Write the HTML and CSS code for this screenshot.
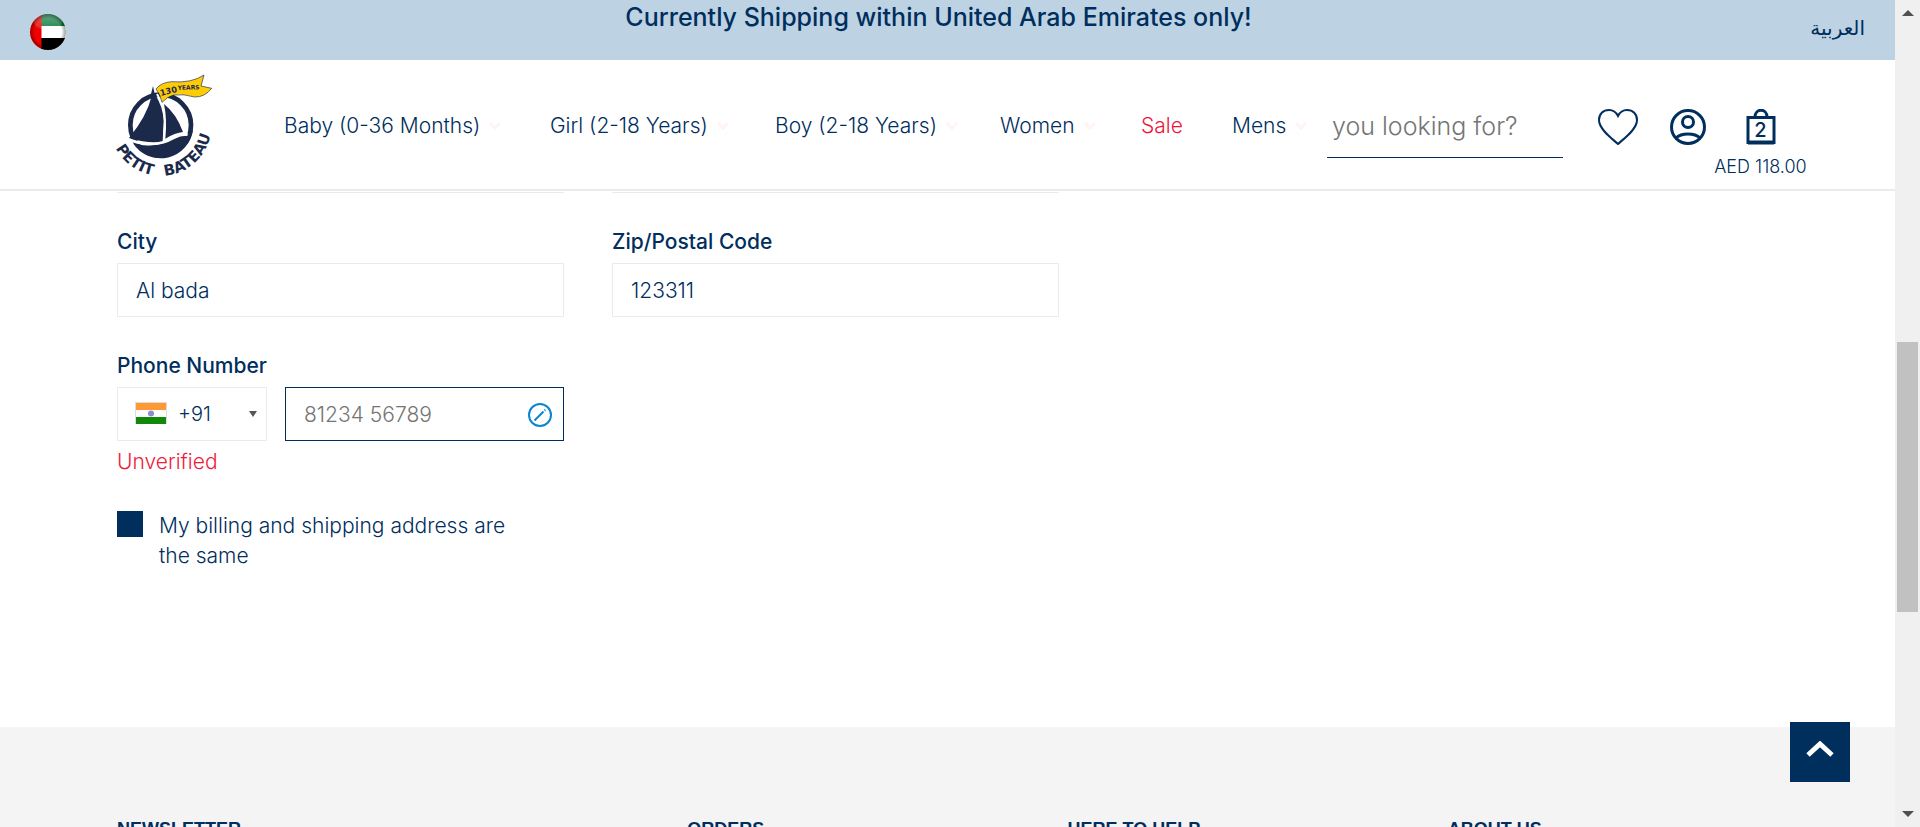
FILE: index.html
```html
<!DOCTYPE html>
<html lang="en">
<head>
<meta charset="utf-8">
<title>Petit Bateau – Shipping address</title>
<link rel="stylesheet" href="styles.css">
</head>
<body>
<div class="window">
  <div class="page">
    <div class="topbar">
      <a class="region" href="#" aria-label="United Arab Emirates">
        <svg class="region-flag" viewBox="0 0 36 36">
          <defs>
            <clipPath id="round"><circle cx="18" cy="18" r="18"/></clipPath>
            <radialGradient id="shade"><stop offset=".75" stop-opacity="0"/><stop offset="1" stop-opacity=".4"/></radialGradient>
            <linearGradient id="gloss" x2="0" y2="1"><stop offset="0" stop-color="#fff" stop-opacity=".35"/><stop offset="1" stop-color="#fff" stop-opacity=".1"/></linearGradient>
          </defs>
          <g clip-path="url(#round)">
            <path fill="#fff" d="M0 0h36v36H0z"/>
            <path fill="#0b7a3b" d="M11 0h25v12H11z"/>
            <path d="M11 24h25v12H11z"/>
            <path fill="#f00000" d="M0 0h11.500v36H0z"/>
            <ellipse cx="18" cy="8" rx="14" ry="8" fill="url(#gloss)"/>
            <circle cx="18" cy="18" r="18" fill="url(#shade)"/>
          </g>
        </svg>
      </a>
      <p class="notice">Currently Shipping within United Arab Emirates only!</p>
      <a class="language" href="#" lang="ar" dir="rtl">العربية</a>
    </div>

    <header class="header">
      <a class="logo" href="#" aria-label="Petit Bateau">
        <svg class="logo-art" viewBox="350 224 288 312">
          <defs>
            <path id="arc-left" d="M346 446A152 152 0 0 0 481 529"/>
            <path id="arc-right" d="M493 529A152 152 0 0 0 633 370"/>
          </defs>
          <circle cx="481" cy="377" r="91" fill="#fff" stroke="#1b2a4b" stroke-width="14"/>
          <path fill="#1b2a4b" d="M398 432Q420 440 455 438Q492 436 522 419Q545 406 568 410L578 388A98 98 0 0 1 398 432z"/>
          <path fill="none" stroke="#fff" stroke-width="8" d="M378 416Q415 436 458 433Q492 430 520 413Q540 401 562 406"/>
          <path fill="#1b2a4b" d="M458 260L463 284Q488 320 490 365L487 425Q455 436 386 416Q440 350 454 290L452 284z"/>
          <path fill="none" stroke="#fff" stroke-width="6" d="M470 284Q494 322 494 368L491 422"/>
          <path fill="#1b2a4b" d="M491 314Q528 343 548 398Q525 400 495 418Q501 360 491 314z"/>
          <path fill="#ffcb05" stroke="#1b2a4b" stroke-width="2" d="M467 269Q482 249 514 247Q574 252 611 227L602 260L634 267Q613 294 583 293Q550 283 520 287Q501 292 485 309Q479 282 467 269z"/>
          <g fill="#1b2a4b">
            <text class="logo-number" transform="translate(481 290) rotate(-14)">130</text>
            <text class="logo-years" transform="translate(532 272) rotate(-2)">YEARS</text>
            <text class="logo-name"><textPath href="#arc-left">PETIT</textPath></text>
            <text class="logo-name"><textPath href="#arc-right">BATEAU</textPath></text>
          </g>
        </svg>
      </a>

      <nav class="nav">
        <a class="nav-link" href="#">Baby (0-36 Months)<svg class="chevron" viewBox="0 0 12 8"><path d="M1 1l5 5 5-5"/></svg></a>
        <a class="nav-link" href="#">Girl (2-18 Years)<svg class="chevron" viewBox="0 0 12 8"><path d="M1 1l5 5 5-5"/></svg></a>
        <a class="nav-link" href="#">Boy (2-18 Years)<svg class="chevron" viewBox="0 0 12 8"><path d="M1 1l5 5 5-5"/></svg></a>
        <a class="nav-link" href="#">Women<svg class="chevron" viewBox="0 0 12 8"><path d="M1 1l5 5 5-5"/></svg></a>
        <a class="nav-link nav-link-sale" href="#">Sale</a>
        <a class="nav-link" href="#">Mens<svg class="chevron" viewBox="0 0 12 8"><path d="M1 1l5 5 5-5"/></svg></a>
      </nav>

      <input class="search" type="search" aria-label="Search" placeholder="you looking for?">

      <div class="actions">
        <a class="action" href="#" aria-label="Wishlist">
          <svg class="icon-heart" viewBox="0 0 40 36"><path d="M20 35C16 31 1 21 1 11C1 5 5 1 11 1C15 1 18 3 20 7C22 3 25 1 29 1C35 1 39 5 39 11C39 21 24 31 20 35z"/></svg>
        </a>
        <a class="action" href="#" aria-label="Account">
          <svg class="icon-user" viewBox="0 0 36 36"><circle cx="18" cy="18" r="16.500"/><circle cx="18" cy="13" r="5.500"/><path d="M6 29Q10 25 18 25T30 29"/></svg>
        </a>
        <a class="cart" href="#" aria-label="Cart">
          <span class="bag">
            <svg class="icon-bag" viewBox="0 0 30 36"><path d="M2 8.500h26v25H2z"/><path d="M2 33.500h26" stroke-width="4"/><path d="M9 8C9 -1 21 -1 21 8"/></svg>
            <span class="bag-count">2</span>
          </span>
          <span class="cart-total">AED 118.00</span>
        </a>
      </div>
    </header>

    <main class="content">
      <form class="form">
        <div class="field-edge"></div>
        <div class="field-edge"></div>

        <div class="field">
          <label class="label" for="city">City</label>
          <input class="input" id="city" type="text" value="Al bada">
        </div>
        <div class="field">
          <label class="label" for="zip">Zip/Postal Code</label>
          <input class="input" id="zip" type="text" value="123311">
        </div>

        <div class="field">
          <label class="label" for="phone">Phone Number</label>
          <div class="phone-row">
            <div class="country">
              <select class="input country-select" aria-label="Country code"><option>+91</option></select>
              <svg class="country-flag" viewBox="0 0 32 22">
                <path fill="#ddd" d="M0 0h32v22H0z"/><path fill="#fff" d="M1 1h30v20H1z"/>
                <path fill="#ff9933" d="M1 1h30v7H1z"/><path fill="#128807" d="M1 15h30v7H1z"/>
                <circle cx="16" cy="11.500" r="3" fill="#8d8dcb"/>
              </svg>
              <svg class="country-arrow" viewBox="0 0 8 6"><path fill="#555" d="M0 0h8L4 6z"/></svg>
            </div>
            <div class="phone">
              <input class="input input-active" id="phone" type="tel" placeholder="81234 56789">
              <button class="edit" type="button" aria-label="Edit phone number">
                <svg class="icon-edit" viewBox="0 0 24 24"><circle cx="12" cy="12" r="11"/><path d="M6.500 17.500l9-9M16.500 7.500l.8-.8"/></svg>
              </button>
            </div>
          </div>
          <p class="status">Unverified</p>
          <div class="same">
            <input class="same-box" id="same" type="checkbox" checked>
            <label class="same-label" for="same">My billing and shipping address are the same</label>
          </div>
        </div>
      </form>
    </main>

    <footer class="footer">
      <h2 class="footer-title">NEWSLETTER</h2>
      <h2 class="footer-title">ORDERS</h2>
      <h2 class="footer-title">HERE TO HELP</h2>
      <h2 class="footer-title">ABOUT US</h2>
    </footer>

    <button class="to-top" type="button" aria-label="Back to top">
      <svg class="icon-up" viewBox="0 0 28 16"><path d="M2 14L14 3l12 11"/></svg>
    </button>
  </div>

  <div class="scrollbar">
    <svg class="scroll-arrow" viewBox="0 0 12 6"><path d="M0 6h12L6 0z"/></svg>
    <div class="scroll-track"><div class="scroll-thumb"></div></div>
    <svg class="scroll-arrow" viewBox="0 0 12 6"><path d="M0 0h12L6 6z"/></svg>
  </div>
</div>
</body>
</html>
```
FILE: styles.css
```css
* { box-sizing: border-box; }

body {
  margin: 0;
  background: #fff;
  color: #002e5d;
  font-family: Inter, "Noto Sans", sans-serif;
  font-size: 21px;
  font-weight: 300;
  line-height: 30px;
}

a { color: inherit; text-decoration: none; }
p, h2 { margin: 0; }
svg { display: block; }
input, select, button { font: inherit; color: inherit; }

.window { display: flex; height: 100vh; overflow: hidden; }
.page { position: relative; flex: 1; min-width: 0; display: flex; flex-direction: column; overflow: hidden; }

/* Announcement bar */
.topbar {
  display: grid;
  grid-template-columns: 1fr auto 1fr;
  flex: none;
  height: 60px;
  padding: 0 30px;
  background: #bdd3e3;
}
.region { width: 36px; padding-top: 14px; }
.region-flag { width: 36px; height: 36px; }
.notice { padding: 2px 18px 0 0; font-size: 25px; font-weight: 500; }
.language { justify-self: end; padding-top: 13px; font-family: "Liberation Serif", "DejaVu Sans", serif; font-size: 20px; font-weight: 400; }

/* Header */
.header {
  display: flex;
  flex: none;
  align-items: center;
  height: 131px;
  padding: 3px 86px 0 117px;
  border-bottom: 2px solid #ebebeb;
}
.logo { flex: none; margin-right: 71px; }
.logo-art { width: 96px; height: 104px; overflow: visible; }
.logo-name { font: bold 45px "DejaVu Sans", sans-serif; }
.logo-number { font: bold 25px "DejaVu Sans", sans-serif; }
.logo-years { font: bold 18px "DejaVu Sans", sans-serif; }

.nav { display: grid; flex: 1; grid-template-columns: 266fr 225fr 225fr 141fr 91fr 95fr; }
.nav-link { display: flex; align-items: center; gap: 9px; white-space: nowrap; }
.nav-link-sale { color: #f0143c; }
.chevron { width: 12px; height: 8px; fill: none; stroke: #fff4f5; stroke-width: 3; }

.search {
  flex: none;
  width: 236px;
  height: 64px;
  padding: 0 5px;
  border: 0;
  border-bottom: 1px solid #002e5d;
  background: none;
  font-size: 25px;
  outline: 0;
}
.search::placeholder, .input::placeholder { color: #757575; opacity: 1; }

.actions { display: flex; align-self: flex-start; margin: 46px 0 0 35px; }
.icon-heart, .icon-user, .icon-bag { height: 36px; fill: none; stroke: #002e5d; }
.icon-heart { width: 40px; margin-right: 32px; stroke-width: 2; }
.icon-user { width: 36px; stroke-width: 3; }
.icon-bag { width: 30px; stroke-width: 3; }
.cart { display: flex; flex-direction: column; align-items: center; gap: 12px; width: 97px; margin-left: 6px; }
.bag { position: relative; }
.bag-count { position: absolute; inset: 8px 0 0; font-size: 20px; font-weight: 500; line-height: 27px; text-align: center; }
.cart-total { font-size: 18px; line-height: 20px; white-space: nowrap; }

/* Address form */
.content { flex: none; height: 536px; padding: 1px 117px 0; }
.form { display: grid; grid-template-columns: 447px 447px; column-gap: 48px; row-gap: 37px; }
.field-edge { height: 1px; background: #ebebeb; }
.label { display: block; margin-bottom: 9px; font-weight: 500; line-height: 24px; }
.input {
  display: block;
  width: 100%;
  height: 54px;
  padding: 0 18px;
  border: 1px solid #ebebeb;
  border-radius: 0;
  background: #fff;
  outline: 0;
}
.input-active { border-color: #002e5d; }
.phone-row { display: grid; grid-template-columns: 150px 1fr; gap: 18px; }
.country, .phone { position: relative; }
.country-select { padding-left: 60px; appearance: none; font-size: 20px; }
.country-flag { position: absolute; top: 15px; left: 18px; width: 32px; height: 22px; pointer-events: none; }
.country-arrow { position: absolute; top: 24px; right: 10px; width: 8px; height: 6px; pointer-events: none; }
.edit { position: absolute; top: 16px; right: 12px; padding: 0; border: 0; background: none; }
.icon-edit { width: 24px; height: 24px; fill: none; stroke: #0a86d1; stroke-width: 2; }
.status { padding-top: 6px; color: #ee1c3a; }
.same { display: grid; grid-template-columns: 26px 1fr; gap: 16px; margin-top: 34px; }
.same-box { width: 26px; height: 26px; margin: 0; appearance: none; background: #002e5d; }
.same-label { padding-right: 32px; }

/* Footer */
.footer {
  display: grid;
  flex: 1;
  grid-template-columns: 3fr 2fr 2fr 2fr;
  padding: 88px 67px 0 117px;
  background: #f4f4f4;
}
.footer-title { font-family: "Liberation Sans Narrow", "Liberation Sans", sans-serif; font-size: 18px; font-weight: 700; line-height: 28px; }

.to-top {
  position: absolute;
  right: 45px;
  bottom: 45px;
  display: grid;
  place-items: center;
  width: 60px;
  height: 60px;
  padding: 0 0 6px;
  border: 0;
  background: #002e5d;
}
.icon-up { width: 28px; height: 16px; fill: none; stroke: #fff; stroke-width: 5; }

/* Scrollbar */
.scrollbar {
  display: flex;
  flex: none;
  flex-direction: column;
  align-items: center;
  width: 25px;
  padding: 10px 0;
  background: #f0f0f0;
}
.scroll-arrow { width: 12px; height: 6px; fill: #505050; }
.scroll-track { display: grid; flex: 1; grid-template-rows: 326fr 270fr 199fr; }
.scroll-thumb { grid-row: 2; width: 21px; background: #c1c1c1; }
```
